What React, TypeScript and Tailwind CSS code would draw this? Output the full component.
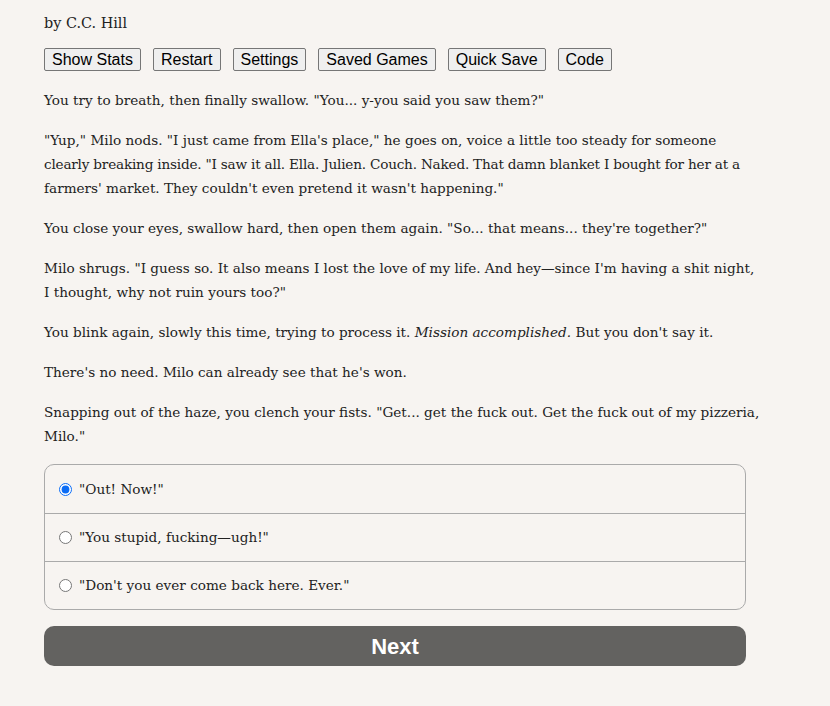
import React, { useState } from "react";

const serif = { fontFamily: '"DejaVu Serif", "Liberation Serif", serif' };
const sans = { fontFamily: '"Liberation Sans", Arial, sans-serif' };

const buttons = ["Show Stats", "Restart", "Settings", "Saved Games", "Quick Save", "Code"];

const choices = [
  '"Out! Now!"',
  '"You stupid, fucking\u2014ugh!"',
  '"Don\'t you ever come back here. Ever."',
];

export default function App() {
  const [picked, setPicked] = useState(0);
  return (
    <div className="min-h-[706px] bg-[#f7f4f1] text-[#222]">
      <div className="w-[702px] ml-[44px] pt-[12px]" style={serif}>
        <div className="text-[14.4px] leading-[22px]">by C.C. Hill</div>
        <div className="flex gap-[12px] mt-[14px]" style={sans}>
          {buttons.map((b) => (
            <button
              key={b}
              className="h-[23px] px-[7px] text-[16px] leading-[19px] text-black bg-[#efefef] border border-[#767676] rounded-[2px]"
            >
              {b}
            </button>
          ))}
        </div>
        <div className="mt-[17px] text-[13.6px] leading-[24px] [&>p]:mb-[16px] [&>p]:whitespace-nowrap">
          <p>You try to breath, then finally swallow. "You... y-you said you saw them?"</p>
          <p>
            "Yup," Milo nods. "I just came from Ella's place," he goes on, voice a little too steady for someone
            <br />
            <span className="tracking-[-0.2px]">
              clearly breaking inside. "I saw it all. Ella. Julien. Couch. Naked. That damn blanket I bought for her at
              a
            </span>
            <br />
            farmers' market. They couldn't even pretend it wasn't happening."
          </p>
          <p>You close your eyes, swallow hard, then open them again. "So... that means... they're together?"</p>
          <p>
            Milo shrugs. "I guess so. It also means I lost the love of my life. And hey—since I'm having a shit night,
            <br />
            I thought, why not ruin yours too?"
          </p>
          <p>
            You blink again, slowly this time, trying to process it. <i>Mission accomplished.</i> But you don't say it.
          </p>
          <p>There's no need. Milo can already see that he's won.</p>
          <p>
            Snapping out of the haze, you clench your fists. "Get... get the fuck out. Get the fuck out of my pizzeria,
            <br />
            Milo."
          </p>
        </div>
        <div className="mt-[4px] border border-[#aaa] rounded-[10px] flex flex-col">
          {choices.map((c, i) => (
            <label
              key={c}
              className={`h-[48px] flex items-center pl-[14px] text-[13.6px] ${i > 0 ? "border-t border-[#aaa]" : ""}`}
            >
              <input
                type="radio"
                name="choice"
                checked={picked === i}
                onChange={() => setPicked(i)}
                className="w-[13px] h-[13px] m-0 mr-[7px] accent-[#0b6cf5]"
              />
              {c}
            </label>
          ))}
        </div>
        <button
          className="mt-[16px] w-full h-[40px] rounded-[10px] bg-[#636260] text-white text-[22px] font-bold"
          style={sans}
        >
          Next
        </button>
      </div>
    </div>
  );
}
